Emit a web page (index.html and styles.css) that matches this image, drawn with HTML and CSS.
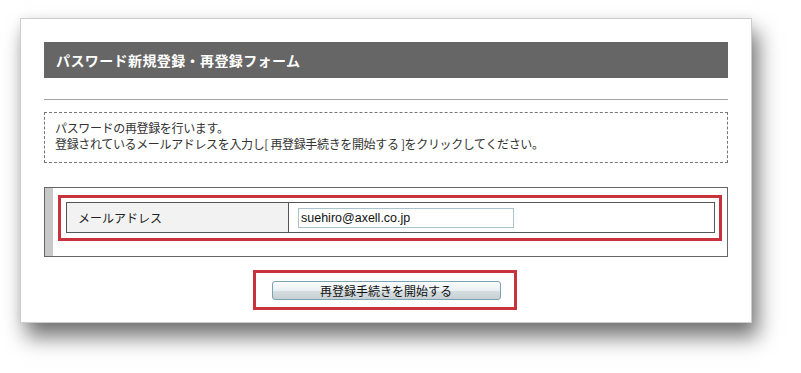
FILE: index.html
```html
<!DOCTYPE html>
<html lang="ja">
<head>
  <meta charset="UTF-8">
  <title>パスワード新規登録・再登録フォーム</title>
  <link rel="stylesheet" href="styles.css">
</head>
<body>
<div class="frame">
  <h1 class="title">パスワード新規登録・再登録フォーム</h1>
  <hr class="rule">
  <div class="notice">
    <p>パスワードの再登録を行います。</p>
    <p>登録されているメールアドレスを入力し[ 再登録手続きを開始する ]をクリックしてください。</p>
  </div>
  <div class="form-box">
    <div class="mark">
      <table class="form-table">
        <tr>
          <th>メールアドレス</th>
          <td><input class="field" type="text" value="suehiro@axell.co.jp"></td>
        </tr>
      </table>
    </div>
  </div>
  <div class="actions">
    <div class="mark mark-btn">
      <button class="btn" type="button">再登録手続きを開始する</button>
    </div>
  </div>
</div>
</body>
</html>
```

FILE: styles.css
```css
* { box-sizing: border-box; margin: 0; padding: 0; }
body {
  font-family: "Noto Sans CJK JP", "Liberation Sans", sans-serif;
  font-size: 12px;
  color: #222;
  background: #fff;
  padding: 18px 0 0 20px;
  min-height: 373px;
}
.frame {
  width: 732px;
  height: 305px;
  background: #fff;
  border: 1px solid #cdcdcd;
  padding: 23px 23px 0 23px;
  box-shadow: 6px 14px 20px rgba(0, 0, 0, 0.55), 0 0 10px rgba(0, 0, 0, 0.06);
}
.title {
  height: 36px;
  background: #666;
  color: #fff;
  font-size: 14px;
  font-weight: bold;
  line-height: 36px;
  padding-left: 12px;
  letter-spacing: 0.4px;
}
.rule {
  border: none;
  border-top: 1px solid #a5a5a5;
  margin-top: 21px;
}
.notice {
  margin-top: 12px;
  border: 1px dashed #777;
  padding: 7px 10px 10px 10px;
  line-height: 16px;
  letter-spacing: -0.35px;
  color: #333;
}
.form-box {
  margin-top: 24px;
  height: 70px;
  border: 1px solid #666;
  box-shadow: inset 8px 0 0 #c8c8c8;
  padding: 7px 5px 0 13px;
}
.mark {
  border: 3px solid #c8323c;
}
.form-box .mark {
  padding: 4px 4px 5px 5px;
}
.form-table {
  width: 100%;
  border-collapse: collapse;
  border: 1px solid #555;
}
.form-table th {
  width: 222px;
  height: 30px;
  background: #f2f2f2;
  border-right: 1px solid #555;
  font-weight: normal;
  text-align: left;
  padding-left: 11px;
  color: #222;
}
.form-table td {
  padding: 0 9px;
}
.field {
  display: block;
  width: 216px;
  height: 20px;
  border: 1px solid #a9c3cf;
  padding: 0 2px;
  font-family: "Liberation Sans", sans-serif;
  font-size: 12.5px;
  color: #111;
}
.actions {
  display: flex;
  justify-content: center;
  margin-top: 13px;
  padding-right: 3px;
}
.mark-btn {
  width: 264px;
  height: 40px;
  padding: 8px 13px 0 16px;
}
.btn {
  display: block;
  width: 229px;
  height: 19px;
  border: 1px solid #7aa2b5;
  border-radius: 3px;
  background: linear-gradient(#fbfdfe, #e9eff2 50%, #d6dde0 55%, #c8d0d4);
  font-family: "Noto Sans CJK JP", sans-serif;
  font-size: 12px;
  line-height: 17px;
  color: #111;
  cursor: pointer;
}
```
